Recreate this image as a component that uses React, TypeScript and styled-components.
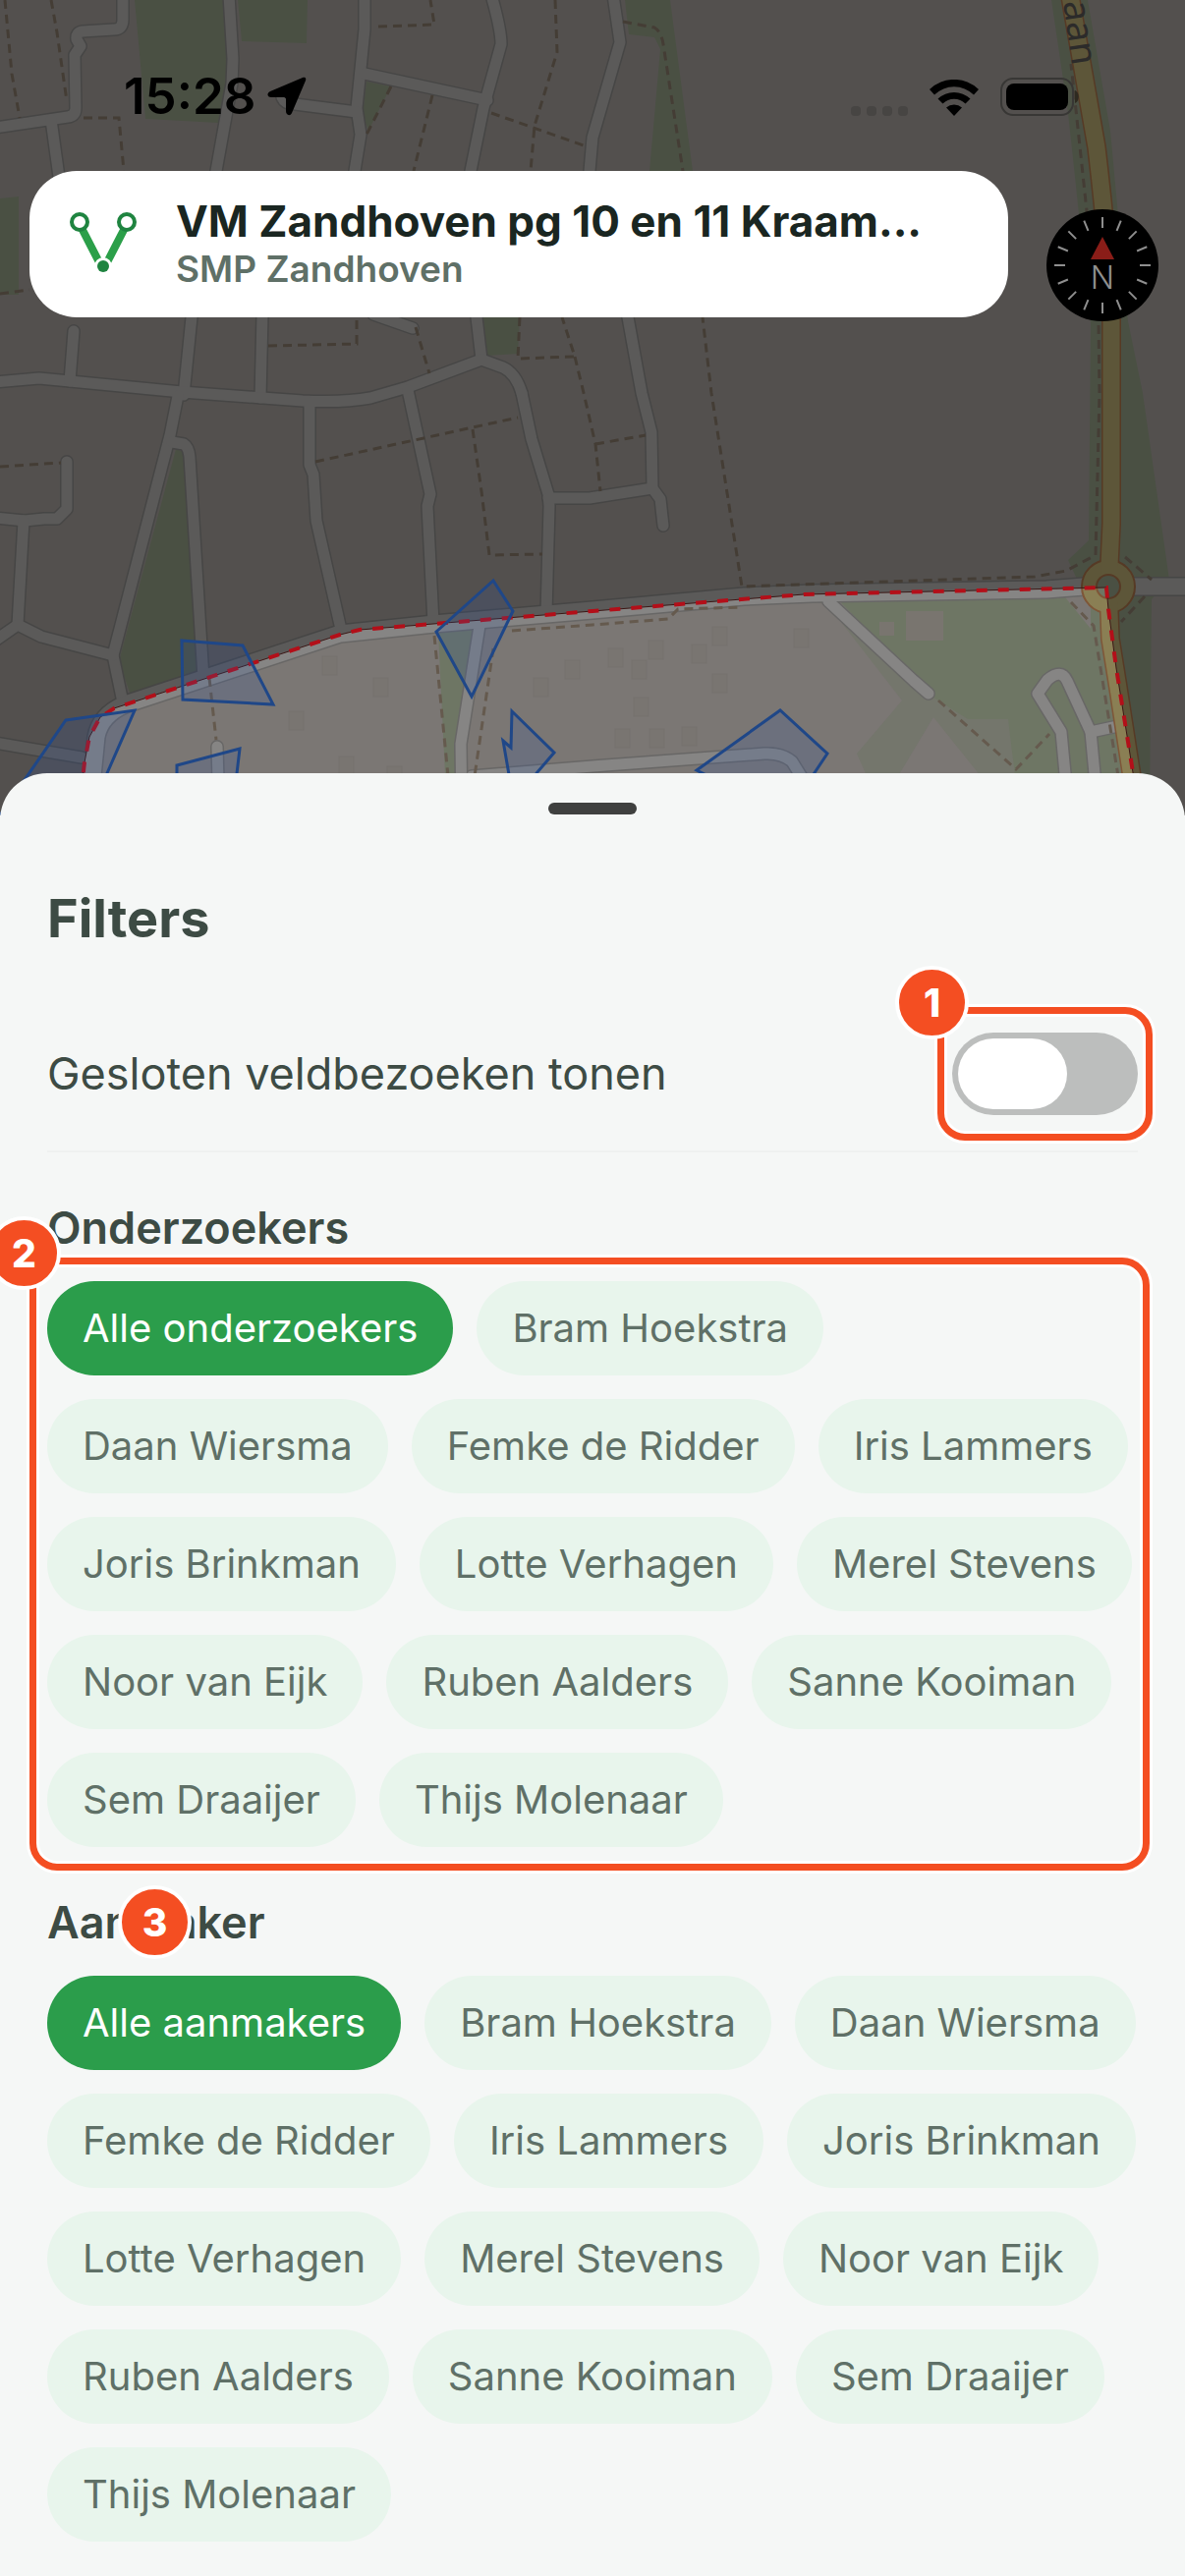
import React from "react";
import styled, { createGlobalStyle } from "styled-components";

const fontFamily = `Inter, "Liberation Sans", sans-serif`;

const colors = {
  sheet: "#f5f7f6",
  text: "#3d4b44",
  muted: "#5f7067",
  green: "#2b9d4b",
  greenSoft: "#e8f5ec",
  callout: "#f44e22",
};

const people = [
  "Bram Hoekstra",
  "Daan Wiersma",
  "Femke de Ridder",
  "Iris Lammers",
  "Joris Brinkman",
  "Lotte Verhagen",
  "Merel Stevens",
  "Noor van Eijk",
  "Ruben Aalders",
  "Sanne Kooiman",
  "Sem Draaijer",
  "Thijs Molenaar",
];

const greenAreas = [
  "137,0 229,0 232,73 222,125 148,121",
  "242,0 313,0 312,44 246,42",
  "373,83 398,88 375,133 369,117",
  "492,323 529,323 527,360 496,362",
  "636,0 682,0 705,174 661,174 672,50 666,38 640,35",
  "0,202 19,200 19,300 0,300",
  "179,457 187,460 200,683 133,708 121,673",
  "446,643 481,640 470,720 464,830 455,830",
  "856,613 1084,608 1110,640 1130,830 1038,830 1026,732 985,732 947,708",
  "1070,0 1107,0 1130,133 1148,327 1163,400 1190,590 1172,610 1170,830 1110,830 1110,620 1087,570 1108,550 1110,330 1087,115",
];

const streets = [
  "M125,-5 V20 Q125,30 116,30 L84,32 Q77,33 78,40 L82,47 76,56 77,110 Q77,118 69,119 L-5,130",
  "M52,122 L60,180",
  "M233,-5 L237,60 236,85 220,174 195,323 187,402",
  "M267,320 L265,405",
  "M371,-5 V30 L363,110 367,137 360,180",
  "M287,99 Q290,106 300,106 L363,114",
  "M371,75 L496,102",
  "M500,-5 Q510,30 510,45 L492,110 479,174 485,323 490,366",
  "M-5,389 L40,385 185,399 308,408 Q350,410 377,405 L415,394 490,366 512,374 Q525,380 531,400",
  "M75,337 L71,388",
  "M380,320 L420,334",
  "M181,403 L173,443 115,667 125,715",
  "M175,450 L187,452 Q192,455 193,465 L207,690",
  "M315,410 V473 L319,483 322,530 348,645",
  "M415,397 L438,503 435,515 441,634",
  "M531,400 L541,447 558,503 559,515 556,624",
  "M558,507 H600 L664,497",
  "M624,-5 L631,43 603,140 600,174 639,323 653,400 663,440 664,497 672,508 675,535",
  "M68,470 V518 L58,528 H45 L25,530 -5,527",
  "M24,530 L18,636",
  "M-5,652 L18,636 42,648 115,667",
  "M-5,756 L83,771",
  "M488,637 L469,757 470,830",
  "M221,760 L223,830",
  "M843,612 L930,693 945,706",
  "M480,790 L603,780 778,767 Q795,766 806,775 L840,830",
  "M1088,830 L1080,745 1056,706 1066,692 Q1080,680 1086,693 L1110,745 1118,830",
  "M1110,745 L1138,739",
];

const mainStreet =
  "M90,830 L98,750 Q102,728 127,717 L346,645 442,635 603,621 757,607 826,604 1065,600 1103,597 H1220";

const footpaths = [
  "M5,0 L12,75 20,120",
  "M52,0 L58,33 68,103",
  "M85,120 H121 L126,174",
  "M385,27 L442,25 438,0",
  "M565,0 L567,53 544,128 540,174",
  "M500,115 L594,148",
  "M440,97 L421,174",
  "M398,88 L373,137",
  "M273,352 L363,350 V323",
  "M423,333 L437,380",
  "M529,323 L527,365 585,363 572,323",
  "M585,363 L594,400 606,452 611,500",
  "M606,452 L657,443",
  "M634,22 L666,28 Q673,32 675,45 L695,174 715,323 724,400 755,597 1053,587 1085,581 1115,565 1119,400 1118,327 1090,65",
  "M0,475 L62,471",
  "M0,299 L30,295",
  "M321,470 L527,425",
  "M481,437 L490,500 498,565 552,564",
  "M521,642 L603,636 680,630 690,620 755,618",
  "M442,647 L456,790",
  "M502,660 L483,790",
  "M213,690 L220,753",
  "M955,713 L1034,783 1068,747",
  "M1090,613 L1113,637 1138,790",
  "M1145,567 L1172,590",
  "M1165,607 L1141,633",
];

const visits = [
  "67,733 137,723 109,787 90,830 0,830",
  "185,652 247,657 278,717 186,712",
  "180,779 244,762 236,830 180,830",
  "502,591 522,622 480,709 444,643",
  "521,724 564,766 546,787 540,800 520,800 512,754 520,761",
  "709,784 794,723 842,767 800,830",
];

const yellowRoad =
  "M1088,-10 L1116,150 Q1129,260 1131,327 V533 L1128,597 1130,650 1138,700 1158,830";

const boundary =
  "M80,830 L86,776 91,750 102,730 116,721 346,646 366,641 603,622 818,605 1126,598 1128,620 1136,680 1160,830";

const houses = [
  [328, 668], [380, 690], [294, 724], [345, 770], [394, 780], [619, 660],
  [660, 652], [704, 656], [725, 638], [808, 640], [643, 672], [725, 686],
  [645, 710], [626, 742], [661, 742], [694, 740], [543, 690], [575, 672],
];

const MapDrawing: React.FC = () => (
  <MapSvg viewBox="0 0 1206 830" preserveAspectRatio="xMidYMin slice" aria-hidden="true">
    <rect width="1206" height="830" fill="#7b7774" />
    <polygon
      points="764,614 838,610 918,713 872,767 900,830 1040,830 1060,740 950,700 860,614"
      fill="#74766c"
    />
    <polygon points="950,730 1030,830 890,830" fill="#7b7774" />
    <g fill="#6e7664">
      {greenAreas.map((points) => (
        <polygon key={points} points={points} />
      ))}
    </g>
    <rect x="922" y="622" width="38" height="30" fill="#79756f" />
    <rect x="895" y="633" width="15" height="14" fill="#79756f" />
    <g fill="#797571" stroke="#76726e">
      {houses.map(([x, y]) => (
        <rect key={`${x}-${y}`} x={x} y={y} width="15" height="19" />
      ))}
    </g>
    <g fill="none" strokeLinejoin="round" strokeLinecap="round">
      <g stroke="#686766" strokeWidth="14">
        {streets.map((d) => (
          <path key={d} d={d} />
        ))}
        <path d={mainStreet} strokeWidth="20" />
      </g>
      <g stroke="#868584" strokeWidth="11">
        {streets.map((d) => (
          <path key={d} d={d} />
        ))}
        <path d={mainStreet} strokeWidth="17" />
      </g>
    </g>
    <g fill="none" stroke="#655a4e" strokeWidth="3" strokeDasharray="9 6">
      {footpaths.map((d) => (
        <path key={d} d={d} />
      ))}
    </g>
    <g fill="none">
      <path d={yellowRoad} stroke="#7f5637" strokeWidth="20" />
      <circle cx="1128" cy="597" r="27" fill="#8a7f54" stroke="#7f5637" strokeWidth="2" />
      <path d={yellowRoad} stroke="#8a7f54" strokeWidth="17" />
      <circle cx="1128" cy="597" r="12" fill="#6e7664" stroke="#7f5637" strokeWidth="2" />
    </g>
    <path d={`${boundary} L1206,830 V0 H0 V830 Z`} fill="#000" fillOpacity="0.32" />
    <text
      x="0"
      y="0"
      transform="translate(1082 2) rotate(82)"
      fontFamily='"Noto Sans", sans-serif'
      fontSize="38"
      fill="#2c2b2a"
    >
      aan
    </text>
    <path d={boundary} fill="none" stroke="#3c1715" strokeWidth="1" />
    <path d={boundary} fill="none" stroke="#b30f19" strokeWidth="4" strokeDasharray="11 11" />
    <g fill="#2a55a8" fillOpacity="0.18" stroke="#1f4788" strokeWidth="3">
      {visits.map((points) => (
        <polygon key={points} points={points} />
      ))}
    </g>
  </MapSvg>
);

const LocationArrow: React.FC = () => (
  <svg width="40" height="40" viewBox="0 0 40 40" aria-hidden="true">
    <path
      d="M36 1 3 15C-1 17 0 21 4 21H17C18 21 19 22 19 23V35C19 39 23 41 25 37L39 4C40 1 38 0 36 1Z"
      fill="#000"
    />
  </svg>
);

const WifiIcon: React.FC = () => (
  <svg width="50" height="37" viewBox="0 0 50 37" aria-hidden="true">
    <path d="M0 10A36 36 0 0 1 50 10L45 15.500A28.500 28.500 0 0 0 5 15.500Z" fill="#000" />
    <path d="M8.500 19.500A24 24 0 0 1 41.500 19.500L36.500 24.500A16.500 16.500 0 0 0 13.500 24.500Z" fill="#000" />
    <path d="M17 28.500A12 12 0 0 1 33 28.500L25 37Z" fill="#000" />
  </svg>
);

const BatteryIcon: React.FC = () => (
  <svg width="80" height="39" viewBox="0 0 80 39" aria-hidden="true">
    <rect x="1" y="1" width="73" height="37" rx="12" fill="none" stroke="#383735" strokeWidth="2" />
    <rect x="6" y="6" width="63" height="27" rx="8" fill="#000" />
    <path d="M76 13C81 15 81 24 76 26Z" fill="#2e2a20" />
  </svg>
);

const SignalDots: React.FC = () => (
  <svg width="58" height="10" viewBox="0 0 58 10" fill="#474543" aria-hidden="true">
    {[0, 16, 32, 48].map((x) => (
      <rect key={x} x={x} width="10" height="10" rx="4" />
    ))}
  </svg>
);

const RouteIcon: React.FC = () => (
  <svg width="72" height="72" viewBox="0 0 72 72" aria-hidden="true">
    <path d="M15 21 32 54M57 21 40 54" stroke="#2b9f49" strokeWidth="8" fill="none" />
    <circle cx="12" cy="13" r="8" fill="#fff" stroke="#1f8440" strokeWidth="4" />
    <circle cx="60" cy="13" r="8" fill="#fff" stroke="#1f8440" strokeWidth="4" />
    <circle cx="36" cy="58" r="9" fill="#fff" />
    <circle cx="36" cy="58" r="6" fill="#1f8440" />
  </svg>
);

const ticks = Array.from({ length: 16 }, (_, i) => i * 22.5);

const CompassIcon: React.FC = () => (
  <svg width="114" height="114" viewBox="0 0 114 114" aria-hidden="true">
    <circle cx="57" cy="57" r="57" fill="#000" />
    <g stroke="#8f8f8f" strokeWidth="2">
      {ticks.map((angle) => (
        <path key={angle} d="M57 8V19" transform={`rotate(${angle} 57 57)`} />
      ))}
    </g>
    <path d="M57 28 69 51H45Z" fill="#8a1d18" />
    <text x="57" y="81" textAnchor="middle" fontFamily={fontFamily} fontSize="32" fontWeight="300" fill="#8f8f8f">
      N
    </text>
  </svg>
);

interface filterGroupProps {
  title: string;
  allLabel: string;
  children?: React.ReactNode;
  highlight?: React.ReactNode;
}

const FilterGroup: React.FC<filterGroupProps> = ({
  title,
  allLabel,
  children,
  highlight,
}) => {
  const [selected, setSelected] = React.useState(allLabel);

  return (
    <Group>
      <GroupTitle>
        {title}
        {children}
      </GroupTitle>
      <ChipList>
        {[allLabel, ...people].map((name) => (
          <Chip
            key={name}
            type="button"
            $active={name === selected}
            aria-pressed={name === selected}
            onClick={() => setSelected(name)}
          >
            {name}
          </Chip>
        ))}
        {highlight}
      </ChipList>
    </Group>
  );
};

const App: React.FC = () => {
  const [showClosed, setShowClosed] = React.useState(false);

  return (
    <Screen>
      <GlobalStyle />
      <MapArea>
        <MapDrawing />
        <StatusBar>
          <Clock>
            15:28
            <LocationArrow />
          </Clock>
          <StatusIcons>
            <SignalDots />
            <WifiIcon />
            <BatteryIcon />
          </StatusIcons>
        </StatusBar>
        <TopBar>
          <ProjectCard>
            <RouteIcon />
            <ProjectText>
              <ProjectName>VM Zandhoven pg 10 en 11 Kraam...</ProjectName>
              <ProjectPlace>SMP Zandhoven</ProjectPlace>
            </ProjectText>
          </ProjectCard>
          <CompassButton type="button" aria-label="Kompas">
            <CompassIcon />
          </CompassButton>
        </TopBar>
      </MapArea>

      <Sheet>
        <Handle />
        <SheetTitle>Filters</SheetTitle>
        <SwitchRow>
          <SwitchLabel htmlFor="showClosed">Gesloten veldbezoeken tonen</SwitchLabel>
          <SwitchBox>
            <Switch
              id="showClosed"
              type="checkbox"
              checked={showClosed}
              onChange={(e) => setShowClosed(e.target.checked)}
            />
            <Highlight $inset="-26px -15px">
              <CornerBadge>1</CornerBadge>
            </Highlight>
          </SwitchBox>
        </SwitchRow>
        <FilterGroup
          title="Onderzoekers"
          allLabel="Alle onderzoekers"
          highlight={
            <Highlight $inset="-24px -12px -24px -18px">
              <CornerBadge>2</CornerBadge>
            </Highlight>
          }
        />
        <FilterGroup title="Aanmaker" allLabel="Alle aanmakers">
          <TitleBadge>3</TitleBadge>
        </FilterGroup>
      </Sheet>
    </Screen>
  );
};

export default App;

const GlobalStyle = createGlobalStyle`
  * {
    box-sizing: border-box;
  }
  body {
    margin: 0;
    background: ${colors.sheet};
    font-family: ${fontFamily};
  }
  svg {
    display: block;
    flex-shrink: 0;
  }
`;

const Screen = styled.main`
  display: flex;
  flex-direction: column;
  min-height: 100vh;
  overflow: hidden;
`;

const MapArea = styled.section`
  position: relative;
  height: 830px;
`;

const MapSvg = styled.svg`
  position: absolute;
  inset: 0;
  width: 100%;
  height: 100%;
`;

const StatusBar = styled.header`
  position: relative;
  display: flex;
  justify-content: space-between;
  align-items: center;
  height: 174px;
  padding: 22px 108px 0 126px;
`;

const Clock = styled.div`
  display: flex;
  align-items: center;
  gap: 12px;
  font-size: 51px;
  line-height: 60px;
  font-weight: 600;
  color: #000;
`;

const StatusIcons = styled.div`
  display: flex;
  align-items: flex-end;
  gap: 22px;
`;

const TopBar = styled.div`
  position: relative;
  display: flex;
  align-items: flex-start;
  gap: 39px;
  padding: 0 27px 0 30px;
`;

const ProjectCard = styled.div`
  flex: 1;
  min-width: 0;
  display: flex;
  align-items: center;
  gap: 38px;
  height: 149px;
  padding: 0 39px;
  border-radius: 48px;
  background: #fff;
`;

const ProjectText = styled.div`
  min-width: 0;
`;

const ProjectName = styled.h1`
  margin: 0;
  font-size: 44px;
  line-height: 50px;
  font-weight: 700;
  color: #1a2621;
  white-space: nowrap;
`;

const ProjectPlace = styled.p`
  margin: 0;
  font-size: 37px;
  line-height: 48px;
  font-weight: 600;
  color: ${colors.muted};
`;

const CompassButton = styled.button`
  margin-top: 39px;
  padding: 0;
  border: none;
  border-radius: 50%;
  background: none;
`;

const Sheet = styled.section`
  position: relative;
  flex: 1;
  display: flex;
  flex-direction: column;
  margin-top: -43px;
  padding: 30px 48px 34px;
  border-radius: 48px 48px 0 0;
  background: ${colors.sheet};
`;

const Handle = styled.div`
  align-self: center;
  width: 90px;
  height: 12px;
  border-radius: 6px;
  background: #3f403f;
`;

const SheetTitle = styled.h2`
  margin: 74px 0 0;
  font-size: 54px;
  line-height: 64px;
  font-weight: 700;
  color: ${colors.text};
`;

const SwitchRow = styled.div`
  display: flex;
  justify-content: space-between;
  align-items: center;
  margin-top: 48px;
  padding: 36px 0;
  border-bottom: 2px solid #eff1f0;
`;

const SwitchLabel = styled.label`
  font-size: 45px;
  line-height: 56px;
  color: ${colors.text};
`;

const SwitchBox = styled.div`
  position: relative;
  display: flex;
`;

const Switch = styled.input`
  appearance: none;
  display: flex;
  width: 189px;
  height: 84px;
  margin: 0;
  padding: 6px;
  border-radius: 42px;
  background: #bcbebd;

  &::before {
    content: "";
    width: 111px;
    height: 72px;
    border-radius: 36px;
    background: #fff;
  }
  &:checked {
    justify-content: flex-end;
    background: ${colors.green};
  }
`;

const Highlight = styled.div<{ $inset: string }>`
  position: absolute;
  inset: ${({ $inset }) => $inset};
  border: 7px solid ${colors.callout};
  border-radius: 28px;
  box-shadow: 0 0 0 3px #fff, inset 0 0 0 3px #fff;
  pointer-events: none;
`;

const Badge = styled.span`
  position: absolute;
  display: flex;
  align-items: center;
  justify-content: center;
  width: 75px;
  height: 75px;
  border: 4px solid #fff;
  border-radius: 50%;
  background: ${colors.callout};
  font-size: 39px;
  line-height: 44px;
  font-weight: 800;
  color: #fff;
`;

const CornerBadge = styled(Badge)`
  top: -49px;
  left: -50px;
`;

const TitleBadge = styled(Badge)`
  top: -10px;
  left: 72px;
`;

const Group = styled.section`
  display: flex;
  flex-direction: column;
  gap: 26px;
  padding-top: 49px;
`;

const GroupTitle = styled.h3`
  position: relative;
  margin: 0;
  font-size: 45px;
  line-height: 56px;
  font-weight: 600;
  color: ${colors.text};
`;

const ChipList = styled.div`
  position: relative;
  display: flex;
  flex-wrap: wrap;
  gap: 24px;
`;

const Chip = styled.button<{ $active: boolean }>`
  height: 96px;
  padding: 0 36px;
  border: none;
  border-radius: 48px;
  background: ${({ $active }) => ($active ? colors.green : colors.greenSoft)};
  font-family: ${fontFamily};
  font-size: 40px;
  line-height: 48px;
  color: ${({ $active }) => ($active ? "#fff" : colors.muted)};
`;
